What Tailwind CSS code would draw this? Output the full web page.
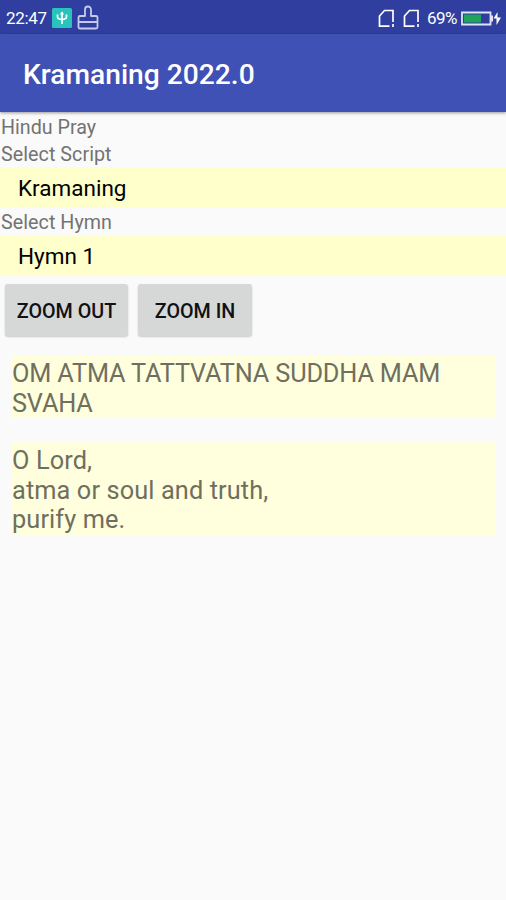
<!DOCTYPE html>
<html lang="en">
<head>
<meta charset="utf-8">
<title>Kramaning</title>
<script src="https://cdn.jsdelivr.net/npm/@tailwindcss/browser@4"></script>
</head>
<body class="w-[506px] h-[900px] overflow-hidden bg-[#fafafa] font-[Roboto,sans-serif] text-[#737373] flex flex-col">
  <div class="h-[34px] shrink-0 bg-[#303f9f] flex items-center text-white pl-[6px] pt-[2px]">
    <span class="w-[46px] text-[17px] leading-[20px] whitespace-nowrap tracking-[-0.3px]">22:47</span>
    <svg class="w-5 h-5 shrink-0" viewBox="0 0 20 20" fill="none"><rect width="20" height="20" rx="1.5" fill="#28c3bd"/><path d="M10 4v12M5.500 6.500v2.500q0 2 4.500 2.500Q14.500 11 14.500 9V6.500" stroke="#fff" stroke-width="1.700"/><path d="M7.800 6.500 10 3.500l2.200 3z" fill="#fff"/></svg>
    <svg class="w-[22px] h-[25px] shrink-0 ml-[5px] -mt-[1px]" viewBox="0 0 22 25" fill="none" stroke="#c5cae9" stroke-width="1.800" stroke-linejoin="round"><path d="M8 11V4.500a3 3 0 0 1 6 0V11h5q1.500 0 1.500 1.500V22q0 1.500-1.500 1.500H3Q1.500 23.500 1.500 22v-9.500Q1.500 11 3 11zM1.500 17h19"/></svg>
    <div class="flex-1"></div>
    <svg class="w-[17px] h-[19px] shrink-0" viewBox="0 0 17 19" fill="none" stroke="#fff" stroke-width="1.700"><path d="M11.500 17.200H1.500V7L6.500 1.500H15V13M15 15v3"/></svg>
    <svg class="w-[17px] h-[19px] shrink-0 ml-[8px]" viewBox="0 0 17 19" fill="none" stroke="#fff" stroke-width="1.700"><path d="M11.500 17.200H1.500V7L6.500 1.500H15V13M15 15v3"/></svg>
    <span class="ml-[7px] w-[34px] text-[17px] leading-[20px] whitespace-nowrap tracking-[-0.5px]">69%</span>
    <svg class="w-[41px] h-[15px] shrink-0 mr-[4px]" viewBox="0 0 41 15"><path d="M1 1.500h28.500v12H1z" fill="#303f9f" stroke="#e0e3f5" stroke-width="1.800"/><path d="M3 3.500h17v8H3z" fill="#1ea55b"/><path d="M29.500 4.500h2.500v6h-2.500z" fill="#e0e3f5"/><path d="m36.500 1-4 6.500h3V14l4.500-7.500h-3.500z" fill="#fff"/></svg>
  </div>
  <header class="h-[78px] shrink-0 bg-[#3f51b5] flex items-center pl-[23px] pt-[4px] shadow-[0_1px_3px_rgba(0,0,0,0.4)]">
    <h1 class="text-white text-[28.200px] leading-[32px] font-medium whitespace-nowrap">Kramaning 2022.0</h1>
  </header>
  <main class="flex flex-col">
    <p class="h-[28px] pl-px pt-[3px] text-[19.700px] leading-[25px] whitespace-nowrap">Hindu Pray</p>
    <p class="h-[27px] pl-px pt-[2px] text-[19.700px] leading-[25px] whitespace-nowrap tracking-[0.05px]">Select Script</p>
    <div class="h-[41px] bg-[#ffffcc] flex items-center pl-[18px] text-black text-[22.500px] leading-[26px]">Kramaning</div>
    <p class="h-[27px] pl-px pt-[2px] text-[19.700px] leading-[25px] whitespace-nowrap tracking-[0.05px]">Select Hymn</p>
    <div class="h-[41px] bg-[#ffffcc] flex items-center pl-[18px] text-black text-[22.500px] leading-[26px]">Hymn 1</div>
    <div class="flex gap-[10px] pl-[5px] pt-[8px]">
      <button class="w-[123px] h-[52px] pt-[3px] rounded-[3px] bg-[#d6d7d7] text-[#111] text-[19.700px] font-medium whitespace-nowrap shadow-[0_1px_2px_rgba(0,0,0,0.2)]">ZOOM OUT</button>
      <button class="w-[114px] h-[52px] pt-[3px] rounded-[3px] bg-[#d6d7d7] text-[#111] text-[19.700px] font-medium whitespace-nowrap shadow-[0_1px_2px_rgba(0,0,0,0.2)]">ZOOM IN</button>
    </div>
    <div class="ml-[12px] w-[484px] mt-[19px] h-[63px] pt-[4px] bg-[#ffffdd] text-[#6f6f60] text-[25.300px] leading-[29.600px] whitespace-nowrap tracking-[-0.16px]">OM ATMA TATTVATNA SUDDHA MAM<br>SVAHA</div>
    <div class="ml-[12px] w-[484px] mt-[23px] h-[94px] pt-[5px] bg-[#ffffdd] text-[#6f6f60] text-[25.300px] leading-[29.600px] whitespace-nowrap tracking-[0.12px]">O Lord,<br>atma or soul and truth,<br>purify me.</div>
  </main>
</body>
</html>
